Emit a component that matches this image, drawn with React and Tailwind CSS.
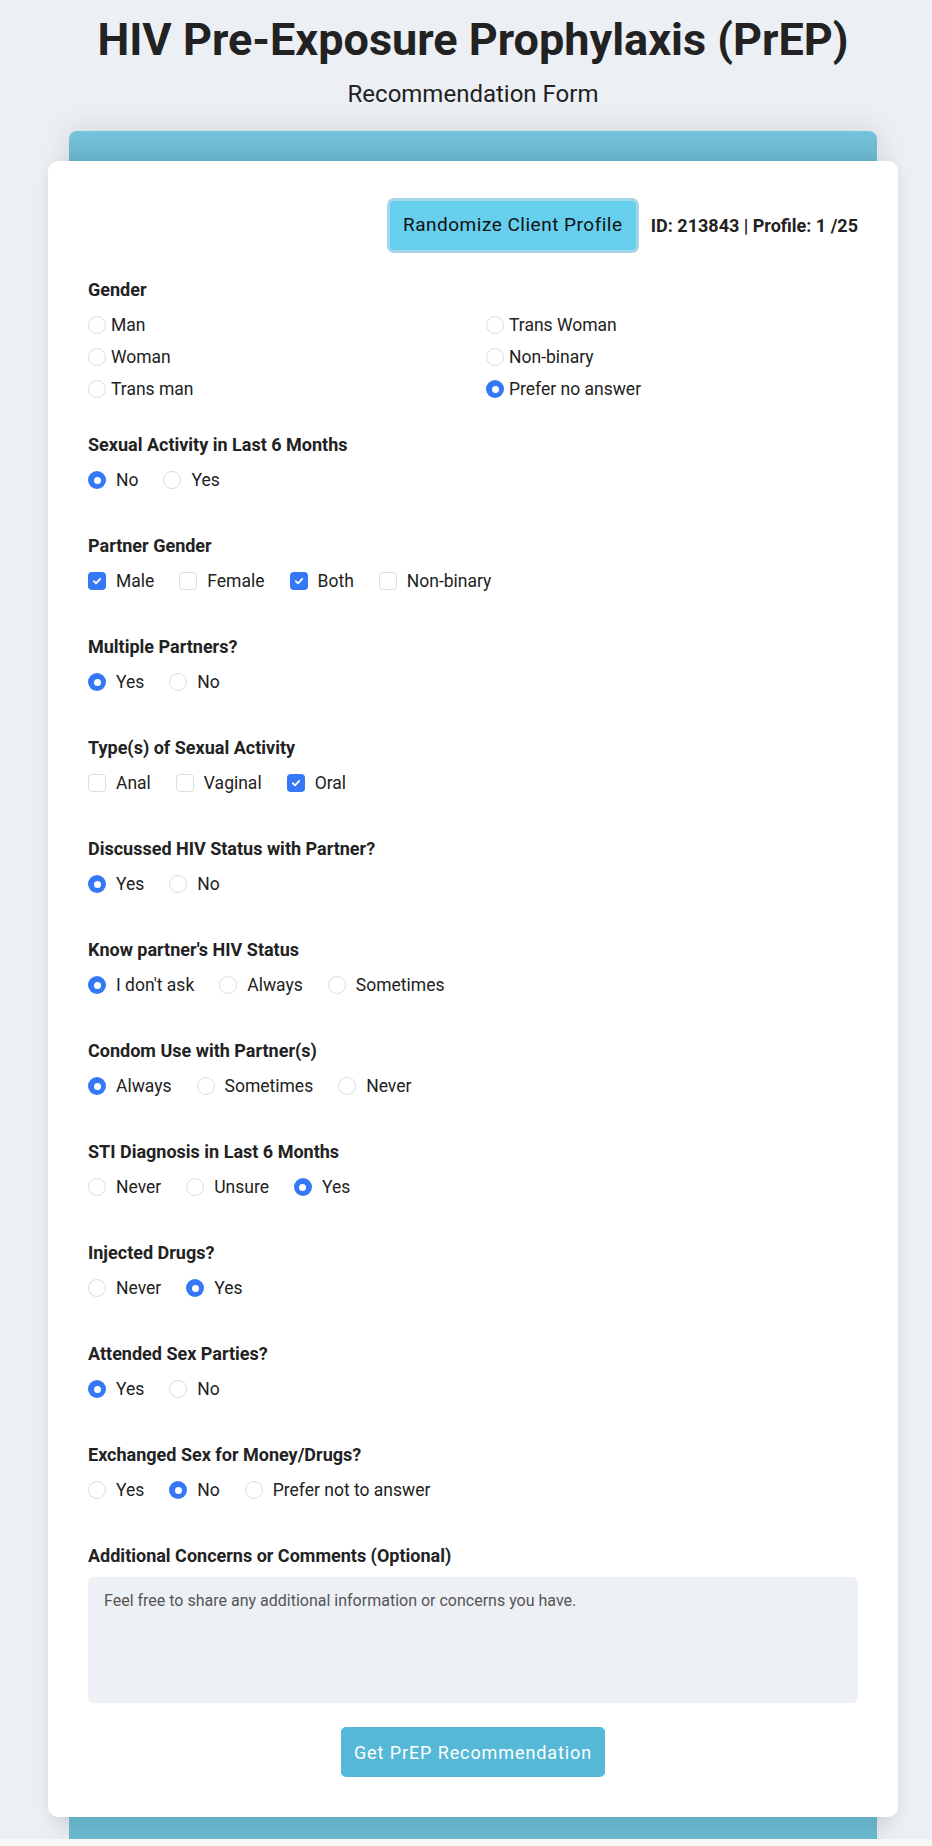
import React from 'react';

const sections = [
  { label: 'Sexual Activity in Last 6 Months', type: 'radio', opts: ['No', 'Yes'], sel: [0] },
  { label: 'Partner Gender', type: 'check', opts: ['Male', 'Female', 'Both', 'Non-binary'], sel: [0, 2] },
  { label: 'Multiple Partners?', type: 'radio', opts: ['Yes', 'No'], sel: [0] },
  { label: 'Type(s) of Sexual Activity', type: 'check', opts: ['Anal', 'Vaginal', 'Oral'], sel: [2] },
  { label: 'Discussed HIV Status with Partner?', type: 'radio', opts: ['Yes', 'No'], sel: [0] },
  { label: "Know partner's HIV Status", type: 'radio', opts: ["I don't ask", 'Always', 'Sometimes'], sel: [0] },
  { label: 'Condom Use with Partner(s)', type: 'radio', opts: ['Always', 'Sometimes', 'Never'], sel: [0] },
  { label: 'STI Diagnosis in Last 6 Months', type: 'radio', opts: ['Never', 'Unsure', 'Yes'], sel: [2] },
  { label: 'Injected Drugs?', type: 'radio', opts: ['Never', 'Yes'], sel: [1] },
  { label: 'Attended Sex Parties?', type: 'radio', opts: ['Yes', 'No'], sel: [0] },
  { label: 'Exchanged Sex for Money/Drugs?', type: 'radio', opts: ['Yes', 'No', 'Prefer not to answer'], sel: [1] },
];

const genders = ['Man', 'Trans Woman', 'Woman', 'Non-binary', 'Trans man', 'Prefer no answer'];

function Radio({ on }) {
  if (on) {
    return (
      <span className="w-[18px] h-[18px] rounded-full bg-[#3478f6] flex items-center justify-center flex-shrink-0">
        <span className="w-[7px] h-[7px] rounded-full bg-white" />
      </span>
    );
  }
  return <span className="w-[18px] h-[18px] rounded-full border border-[#dcdcdc] bg-white flex-shrink-0" />;
}

function Check({ on }) {
  if (on) {
    return (
      <span className="w-[18px] h-[18px] rounded-[4px] bg-[#3478f6] flex items-center justify-center flex-shrink-0">
        <svg width="12" height="12" viewBox="0 0 12 12" fill="none">
          <path d="M2.8 6.2l2.2 2.2 4.2-4.6" stroke="white" strokeWidth="1.8" strokeLinecap="round" strokeLinejoin="round" />
        </svg>
      </span>
    );
  }
  return <span className="w-[18px] h-[18px] rounded-[4px] border border-[#dcdcdc] bg-white flex-shrink-0" />;
}

function Option({ type, on, text, tight }) {
  return (
    <label className={`flex items-center h-[24px] text-[17.5px] text-[#222] ${tight ? 'gap-[5px]' : 'gap-[10px]'}`}>
      {type === 'check' ? <Check on={on} /> : <Radio on={on} />}
      <span>{text}</span>
    </label>
  );
}

function Label({ children }) {
  return <div className="text-[18px] font-bold leading-[24px] text-[#222]">{children}</div>;
}

export default function App() {
  return (
    <div className="font-['Roboto','Liberation_Sans',sans-serif]">
      <div className="bg-[#ecf0f5] pl-[14px] pt-[13px]">
        <h1 className="text-center text-[45px] font-bold leading-[54px] text-[#222]">
          HIV Pre-Exposure Prophylaxis (PrEP)
        </h1>
        <p className="mt-[12px] text-center text-[24px] leading-[30px] text-[#222]">Recommendation Form</p>

        <div className="mx-auto mt-[22px] w-[808px] rounded-t-[8px] bg-[linear-gradient(to_bottom,#74c4db,#68b3ca_30px,#69b6cd)] pt-[30px] pb-[22px] shadow-[0_0_30px_rgba(0,0,0,0.13)]">
          <div className="mx-[-21px] rounded-[10px] bg-white px-[40px] pt-[37px] pb-[40px] shadow-[0_4px_16px_rgba(0,0,0,0.08)]">
            {/* top row */}
            <div className="flex items-center justify-end gap-[12px]">
              <button className="h-[55px] w-[252px] rounded-[7px] border-[3px] border-[#a6d7e8] bg-[#67cfee] text-[19px] text-[#111] tracking-[0.5px]">
                Randomize Client Profile
              </button>
              <span className="text-[18px] font-bold text-[#222]">ID: 213843 | Profile: 1 /25</span>
            </div>

            {/* gender */}
            <div className="mt-[25px]">
              <Label>Gender</Label>
              <div className="mt-[11px] grid grid-cols-[398px_1fr] gap-y-[8px]">
                {genders.map((g) => (
                  <Option key={g} type="radio" tight on={g === 'Prefer no answer'} text={g} />
                ))}
              </div>
            </div>

            {sections.map((s, i) => (
              <div key={s.label} className={i === 0 ? 'mt-[32px]' : 'mt-[42px]'}>
                <Label>{s.label}</Label>
                <div className="mt-[11px] flex items-center gap-x-[25px]">
                  {s.opts.map((o, j) => (
                    <Option key={o} type={s.type} on={s.sel.includes(j)} text={o} />
                  ))}
                </div>
              </div>
            ))}

            <div className="mt-[42px]">
              <Label>Additional Concerns or Comments (Optional)</Label>
              <textarea
                className="mt-[9px] block h-[126px] w-full resize-none rounded-[6px] bg-[#edf0f5] px-[16px] pt-[12px] text-[16px] leading-[24px] text-[#333] placeholder:text-[#555] outline-none"
                placeholder="Feel free to share any additional information or concerns you have."
              />
            </div>

            <div className="mt-[24px] flex justify-center">
              <button className="h-[50px] w-[264px] rounded-[5px] bg-[#54b8d6] text-[18px] text-white tracking-[0.9px]">
                Get PrEP Recommendation
              </button>
            </div>
          </div>
        </div>
      </div>
      <div className="h-[8px] bg-[#f7f7f7]" />
    </div>
  );
}
